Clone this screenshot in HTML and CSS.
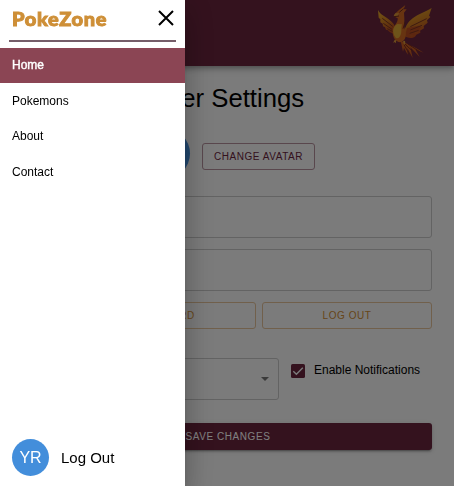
FILE: index.html
```html
<!DOCTYPE html>
<html lang="en">
<head>
<meta charset="utf-8">
<title>PokeZone</title>
<link rel="stylesheet" href="styles.css">
</head>
<body>
<header class="appbar">
  <svg class="phoenix" viewBox="54 15 162 165" aria-hidden="true">
    <defs><linearGradient id="wing" x1="0" y1="0" x2="0.4" y2="1"><stop offset="0" stop-color="#e8b02c"/><stop offset=".55" stop-color="#cf7d20"/><stop offset="1" stop-color="#b5451e"/></linearGradient></defs>
    <path fill="url(#wing)" d="M54 30 C60 43 76 50 86 58 C98 66 105 76 109 88 L103 102 C92 99 86 95 84 91 L78 89 L75 82 L69 79 L68 71 L61 67 L61 58 L56 53 Z"/>
    <path fill="url(#wing)" d="M215 24 C199 34 172 43 158 55 C143 66 139 78 132 92 L135 109 C147 116 158 115 165 110 L169 104 L181 98 L180 92 L192 85 L191 78 L203 68 L201 61 L211 51 L207 47 Z"/>
    <path fill="#b94d20" d="M141 84 L176 77 L186 82 L178 87 L181 97 L164 96 L168 106 L150 105 L154 113 L135 108 Z"/>
    <path fill="none" stroke="#7d3520" stroke-width="3" d="M67 55 L98 79 M70 70 L96 88 M82 86 L101 96 M151 80 L200 56 M151 90 L186 76 M149 100 L176 91"/>
    <path fill="#c85d20" d="M122 122 C137 130 162 139 191 158 L166 148 L179 171 L151 142 L158 174 L142 145 L143 164 L132 143 L129 155 Z"/>
    <path fill="none" stroke="#7b2b1c" stroke-width="3" d="M135 132 L159 155 M132 134 L149 164 M144 132 L176 153"/>
    <path fill="#cf6822" d="M104 42 L117 30 L136 15 L131 28 L140 28 L132 38 L133 55 C134 67 130 76 134 87 C141 104 138 123 121 127 C107 127 97 111 98 94 C99 79 115 68 113 55 L101 49 Z"/>
    <path fill="#dda634" d="M112 72 C100 79 96 92 103 107 C107 116 115 118 120 109 C127 98 122 86 126 73 Z"/>
    <path fill="#d8963a" d="M101 48 L106 40 L117 39 L113 48 Z M104 119 L99 129 L103 126 L107 130 L109 121 Z M129 124 L132 134 L136 130 L135 122 Z"/>
    <path fill="none" stroke="#722c1b" stroke-width="3" d="M118 37 L131 26 M102 50 L117 48 M135 67 L129 86"/>
  </svg>
</header>
<main class="page">
  <h1>User Settings</h1>
  <div class="avatar-row"><span class="avatar large">YR</span><button class="btn change">CHANGE AVATAR</button></div>
  <div class="field"></div>
  <div class="field"></div>
  <div class="actions"><button class="btn gold">CHANGE PASSWORD</button><button class="btn gold">LOG OUT</button></div>
  <div class="options">
    <div class="select"><svg viewBox="0 0 8 4"><path fill="#757575" d="M0 0H8L4 4Z"/></svg></div>
    <label class="notify"><svg viewBox="0 0 14 14"><rect width="14" height="14" rx="1.6" fill="#68243c"/><path fill="none" stroke="#f6f6f6" stroke-width="1.4" d="M2.3 7.2L5.4 10.2L11.8 3.8"/></svg><span>Enable Notifications</span></label>
  </div>
  <button class="btn save">SAVE CHANGES</button>
</main>
<div class="backdrop"></div>
<aside class="drawer">
  <div class="drawer-head"><span class="brand">PokeZone</span><svg class="close" viewBox="0 0 16 16"><path fill="none" stroke="#000" stroke-width="2" d="M1 1L15 15M15 1L1 15"/></svg></div>
  <nav><a class="active">Home</a><a>Pokemons</a><a>About</a><a>Contact</a></nav>
  <div class="account"><span class="avatar">YR</span><span>Log Out</span></div>
</aside>
</body>
</html>
```
FILE: styles.css
```css
* { box-sizing: border-box; }
html, body { height: 100%; }
body { margin: 0; overflow: hidden; background: #f6f6f6; color: #000; font-family: "Liberation Sans", Arial, sans-serif; }
.appbar { height: 66px; padding: 5px 22px 0 0; display: flex; justify-content: flex-end; background: #68243c; box-shadow: 0 2px 4px -1px rgba(0,0,0,.2), 0 4px 5px rgba(0,0,0,.14), 0 1px 10px rgba(0,0,0,.12); }
.phoenix { width: 54px; height: 55px; }
.page { padding: 16px 22px 0; }
h1 { margin: 0; height: 32px; line-height: 32px; font-size: 25.7px; font-weight: 400; text-align: center; }
.avatar-row { height: 51px; margin-top: 14px; display: flex; justify-content: center; align-items: center; gap: 12px; }
.avatar { width: 37px; height: 37px; border-radius: 50%; display: flex; align-items: center; justify-content: center; flex: none; background: #438edb; color: #fff; font-size: 16px; }
.avatar.large { width: 51px; height: 51px; }
.btn { font: 10px "Liberation Sans", Arial, sans-serif; letter-spacing: .55px; height: 27px; padding: 0; border: 1px solid; border-radius: 3px; background: transparent; }
.change { width: 113px; margin-top: 5px; color: #68243c; border-color: #b38f9b; }
.field { height: 42px; margin-top: 17px; border: 1px solid #c6c6c6; border-radius: 3px; }
.field + .field { margin-top: 11px; }
.actions { display: grid; grid-template-columns: 234px 1fr; gap: 6px; margin-top: 11px; }
.gold { color: #ce8c34; border-color: #e2c199; }
.options { display: flex; margin-top: 29px; height: 42px; }
.select { width: 257px; border: 1px solid #c6c6c6; border-radius: 3px; display: flex; justify-content: flex-end; align-items: center; padding-right: 9px; }
.select svg { width: 8px; height: 4px; }
.notify { display: flex; align-items: center; height: 24px; margin-left: 12px; gap: 9px; font-size: 12px; white-space: nowrap; }
.notify svg { width: 14px; height: 14px; margin-top: 1px; }
.save { display: block; width: 100%; margin-top: 23px; padding-left: 2px; color: #fff; background: #68243c; border: 0; box-shadow: 0 3px 1px -2px rgba(0,0,0,.2), 0 2px 2px rgba(0,0,0,.14), 0 1px 5px rgba(0,0,0,.12); }
.backdrop { position: fixed; inset: 0; background: rgba(0,0,0,.5); }
.drawer { position: fixed; inset: 0 auto 0 0; width: 185px; display: flex; flex-direction: column; background: #fff; box-shadow: 0 8px 10px -5px rgba(0,0,0,.2), 0 16px 24px 2px rgba(0,0,0,.14), 0 6px 30px 5px rgba(0,0,0,.12); }
.drawer-head { height: 42px; margin: 0 9px; padding: 0 2px 0 3px; display: flex; justify-content: space-between; align-items: flex-start; border-bottom: 2px solid #755d69; }
.brand { color: #ce8f37; font: 900 18px/24px Lato, sans-serif; letter-spacing: .6px; margin-top: 7px; -webkit-text-stroke: .9px #ce8f37; transform: scaleX(1.11); transform-origin: left; }
.close { width: 16px; height: 16px; margin-top: 10px; }
nav { padding-top: 6px; }
nav a { display: block; height: 35.6px; padding-left: 12px; line-height: 35.4px; font-size: 12px; }
nav .active { background: #8b4554; color: #fff; -webkit-text-stroke: .4px #fff; height: 35px; line-height: 34px; }
nav .active + a { line-height: 36px; }
nav a:last-child { line-height: 36px; }
.account { margin: auto 12px 10px; display: flex; align-items: center; gap: 12px; font-size: 15px; }
```
